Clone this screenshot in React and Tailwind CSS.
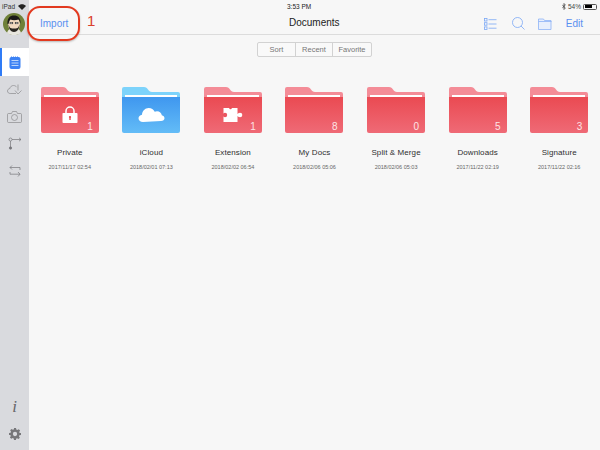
const font = { fontFamily: '"Liberation Sans", Arial, sans-serif' };

const folders = [
    {name: "Private", date: "2017/11/17 02:54", count: "1", icon: "lock"},
    {name: "iCloud", date: "2018/02/01 07:13", count: "", icon: "cloud", blue: true},
    {name: "Extension", date: "2018/02/02 06:54", count: "1", icon: "puzzle"},
    {name: "My Docs", date: "2018/02/06 05:06", count: "8"},
    {name: "Split & Merge", date: "2018/02/06 05:03", count: "0"},
    {name: "Downloads", date: "2017/11/22 02:19", count: "5"},
    {name: "Signature", date: "2017/11/22 02:16", count: "3"},
];

const FolderIcon = ({name, blue, icon}) => {
    const id = "grad-" + name.replace(/\W/g, "");
    return (
        <svg width="58" height="46" viewBox="0 0 58 46" className="block">
            <defs>
                <linearGradient id={id} x1="0" y1="0" x2="0" y2="1">
                    <stop offset="0" stopColor={blue ? "#3f97ef" : "#ea4a52"} />
                    <stop offset="1" stopColor={blue ? "#63bcf7" : "#ef6a76"} />
                </linearGradient>
            </defs>
            <path d="M0 2a2 2 0 0 1 2-2h20c2 0 3 1 4 2.500c1 1.500 2 2.500 4 2.500h26a2 2 0 0 1 2 2v8H0z" fill={blue ? "#7dd3fb" : "#f48c97"} />
            <path d="M0 10h58v34a2 2 0 0 1-2 2H2a2 2 0 0 1-2-2z" fill={`url(#${id})`} />
            <rect x="3" y="8" width="52" height="2" fill="#ffffff" />
            {icon === "lock" && (
                <g>
                    <path d="M25 27v-3a4 4 0 0 1 8 0v3" fill="none" stroke="#fff" strokeWidth="1.500" />
                    <rect x="21.500" y="26" width="15" height="10" rx="0.800" fill="#fff" />
                    <rect x="28.300" y="29.500" width="1.400" height="3.500" fill="#ea4a52" />
                    <circle cx="29" cy="30" r="1.100" fill="#ea4a52" />
                </g>
            )}
            {icon === "cloud" && (
                <path d="M21 35c-2.500 0-4.500-1.600-4.500-3.700c0-1.900 1.500-3.300 3.500-3.600c.3-3.900 3.300-6.700 6.700-6.700c2.700 0 5 1.500 6 3.800c.7-.4 1.500-.6 2.300-.6c2.600 0 4.600 1.900 4.800 4.100c1.600.4 2.700 1.500 2.700 3c0 1.500-1.500 2.700-3.500 2.700z" fill="#fff" />
            )}
            {icon === "puzzle" && (
                <g>
                    <rect x="19.500" y="21" width="14" height="14" fill="#fff" />
                    <rect x="33" y="26.800" width="2" height="2.400" fill="#fff" />
                    <circle cx="36" cy="28" r="2.300" fill="#fff" />
                    <circle cx="21" cy="28" r="2.200" fill="#ea5560" />
                    <circle cx="26.500" cy="21" r="1.300" fill="#ea4f58" />
                </g>
            )}
        </svg>
    );
};

const FolderCell = ({folder}) => (
    <div className="flex flex-col items-center">
        <div className="relative w-[58px] h-[46px]">
            <FolderIcon {...folder} />
            {folder.count && (
                <span className="absolute right-[6px] bottom-0 text-[10px] leading-[12px] text-[#fde4e6]">{folder.count}</span>
            )}
        </div>
        <div className="mt-[14px] text-[8px] leading-[11px] text-[#2f2f2f] tracking-[0.1px]">{folder.name}</div>
        <div className="mt-[5px] text-[5.5px] leading-[8px] text-[#666]">{folder.date}</div>
    </div>
);

const SideIcon = ({children, className = ""}) => (
    <div className={`flex justify-center items-center ${className}`}>{children}</div>
);

const Sidebar = () => (
    <div className="w-[29px] h-full shrink-0 bg-[#d9dade] flex flex-col">
        <div className="pt-[13px] pl-[3px] h-[48px]">
            <svg width="22" height="22" viewBox="0 0 22 22" className="block">
                <circle cx="11" cy="11" r="11" fill="#6f8038" />
                <path d="M4 20c1-4 4-5 7-5s6 1 7 5c-2 1.500-4.500 2-7 2s-5-.5-7-2z" fill="#e8e6df" />
                <ellipse cx="11" cy="11" rx="6" ry="7.500" fill="#f1d9c0" />
                <path d="M4.500 11C4 5 7 2.500 11 2.500S18 5 17.500 11c-.5-2-1-3.500-2-4.500c-3 1-6 1-8 0c-1 1-1.500 2.500-2 4.500z" fill="#1b1a17" />
                <path d="M5.500 11c0 5 2.500 8 5.500 8s5.500-3 5.500-8c-.5 2-1 3.500-2 4c-2 .8-5 .8-7 0c-1-.5-1.500-2-2-4z" fill="#2a2723" />
                <rect x="7" y="9.300" width="2.800" height="1.500" fill="#fff" stroke="#111" strokeWidth="0.500" />
                <rect x="12.200" y="9.300" width="2.800" height="1.500" fill="#fff" stroke="#111" strokeWidth="0.500" />
            </svg>
        </div>
        <div className="h-[28px] bg-white border-l-2 border-[#2f7bf6] flex items-center justify-center pr-[2px]">
            <svg width="12" height="13" viewBox="0 0 12 13">
                <rect x="0.500" y="1" width="11" height="12" rx="2" fill="#3d82f4" />
                <path d="M2.500 .5v2M4.500 .5v2M6.500 .5v2M8.500 .5v2" stroke="#3d82f4" strokeWidth="1" />
                <path d="M2.500 4.500h7M2.500 7h7M2.500 9.500h7" stroke="#bcd5fb" strokeWidth="1" />
            </svg>
        </div>
        <SideIcon className="h-[27px]">
            <svg width="16" height="12" viewBox="0 0 16 12" fill="none" stroke="#8b8b8e" strokeWidth="0.700">
                <path d="M9 9.500H3.200C1.700 9.500.5 8.500.5 7c0-1.300 1-2.300 2.300-2.500C3.200 2.700 4.700 1.500 6.500 1.500c1.300 0 2.500.6 3.200 1.700" />
                <path d="M11 .5v6M8 6.500l3 3.500 3.500-3.500" />
            </svg>
        </SideIcon>
        <SideIcon className="h-[27px]">
            <svg width="15" height="12" viewBox="0 0 15 12" fill="none" stroke="#8b8b8e" strokeWidth="0.700">
                <path d="M1.500 2.500h3l1-2h4l1 2h3a1 1 0 0 1 1 1v7a1 1 0 0 1-1 1h-12a1 1 0 0 1-1-1v-7a1 1 0 0 1 1-1z" />
                <circle cx="7.500" cy="6.500" r="3" />
            </svg>
        </SideIcon>
        <SideIcon className="h-[27px]">
            <svg width="14" height="13" viewBox="0 0 14 13" fill="none" stroke="#77777b" strokeWidth="0.700">
                <circle cx="2.500" cy="2.500" r="1.500" />
                <path d="M4 2.500h9M11 .8l2 1.700-2 1.700M2.500 4v6" />
                <circle cx="2.500" cy="11" r="1.200" fill="#77777b" />
            </svg>
        </SideIcon>
        <SideIcon className="h-[27px]">
            <svg width="12" height="12" viewBox="0 0 12 12" fill="none" stroke="#77777b" strokeWidth="0.700">
                <path d="M3 .5L1 2.500l2 2M1 2.500h10V5M9 7l2 2.200-2 2.300M11 9.200H1V7" />
            </svg>
        </SideIcon>
        <div className="flex-1" />
        <SideIcon className="h-[20px] mb-[10px]">
            <span className="text-[17px] leading-[20px] italic text-[#66666a]" style={{fontFamily: '"Liberation Serif", serif'}}>i</span>
        </SideIcon>
        <SideIcon className="h-[13px] mb-[10px]">
            <svg width="12" height="12" viewBox="0 0 24 24">
                <path fill="#77777a" fillRule="evenodd" d="M10 0h4l.6 3.200 2.100.9 2.700-1.800 2.800 2.800-1.800 2.700.9 2.100L24 10v4l-3.200.6-.9 2.100 1.800 2.700-2.800 2.800-2.700-1.800-2.100.9L14 24h-4l-.6-3.200-2.100-.9-2.700 1.800-2.800-2.800 1.800-2.700-.9-2.100L0 14v-4l3.200-.6.900-2.100L2.300 4.600l2.800-2.800 2.700 1.800 2.100-.9zM12 7.700a4.300 4.300 0 1 0 0 8.600A4.300 4.300 0 0 0 12 7.700z" />
            </svg>
        </SideIcon>
    </div>
);

const StatusBar = () => (
    <div className="absolute top-0 left-0 w-full h-[13px] flex items-center justify-between px-[2px] text-[#333] text-[6.500px] leading-[13px]">
        <div className="flex items-center gap-[3px]">
            <span>iPad</span>
            <svg width="8" height="6" viewBox="0 0 8 6"><path d="M4 6L0 2c2.200-2.300 5.800-2.300 8 0z" fill="#222" /></svg>
        </div>
        <span className="absolute left-[287px] text-[#222]">3:53 PM</span>
        <div className="flex items-center gap-[2px] pr-[1px] text-[#444]">
            <svg width="4" height="7" viewBox="0 0 4 7" fill="none" stroke="#333" strokeWidth="0.700">
                <path d="M.3 1.800l3 3.300-1.300 1.400V.5l1.300 1.400-3 3.300" />
            </svg>
            <span>54%</span>
            <div className="w-[14px] h-[6px] border border-[#555] rounded-[1.500px] p-[0.500px]">
                <div className="w-[7px] h-full bg-black" />
            </div>
        </div>
    </div>
);

const Header = () => (
    <div className="h-[21px] mt-[13px] border-b border-[#dcdcdc] box-content flex items-center justify-between pl-[11px] pr-[17px] relative">
        <span className="text-[10px] text-[#5a90f0]">Import</span>
        <span className="absolute left-[260px] top-[2px] text-[10px] text-[#1c1c1c] font-medium">Documents</span>
        <div className="flex items-center">
            <svg width="13" height="12" viewBox="0 0 13 12" fill="none" stroke="#7aa7f5" strokeWidth="0.800">
                <rect x="0.500" y="0.500" width="2.500" height="2.500" />
                <rect x="0.500" y="4.700" width="2.500" height="2.500" />
                <rect x="0.500" y="8.900" width="2.500" height="2.500" />
                <path d="M4.500 1.700h8M4.500 6h8M4.500 10.200h8" />
            </svg>
            <svg className="ml-[15px]" width="13" height="13" viewBox="0 0 13 13" fill="none" stroke="#7aa7f5" strokeWidth="0.800">
                <circle cx="5.500" cy="5.500" r="5" />
                <path d="M9 9l3.500 3.500" />
            </svg>
            <svg className="ml-[13px]" width="14" height="12" viewBox="0 0 14 12" fill="#e8effc" stroke="#8db3f6" strokeWidth="0.800">
                <path d="M.5 11.500V1h5l1 1.500h6.500v9z" />
                <path d="M.5 3.500h13" fill="none" />
            </svg>
            <span className="ml-[14px] text-[10px] text-[#5a90f0]">Edit</span>
        </div>
    </div>
);

const Segments = () => (
    <div className="flex justify-center mt-[7px]">
        <div className="flex h-[15px] border border-[#d2d2d2] rounded-[2px] bg-[#f9f9f9] text-[7.5px] leading-[13px] text-[#777]">
            <div className="w-[38px] text-center border-r border-[#d2d2d2]">Sort</div>
            <div className="w-[37px] text-center border-r border-[#d2d2d2]">Recent</div>
            <div className="w-[38px] text-center">Favorite</div>
        </div>
    </div>
);

export default function App() {
    return (
        <div className="relative w-[600px] h-[450px] flex overflow-hidden bg-[#f7f7f7]" style={font}>
            <Sidebar />
            <div className="flex-1 min-w-0">
                <Header />
                <Segments />
                <div className="grid grid-cols-7 mt-[30px]">
                    {folders.map((f) => (
                        <FolderCell key={f.name} folder={f} />
                    ))}
                </div>
            </div>
            <StatusBar />
            {/* the red marks are drawn on top of the screenshot */}
            <div className="absolute left-[27px] top-[6px] w-[53px] h-[35px] border-2 border-[#e2391f] rounded-[13px] shadow-[0_1px_2px_rgba(0,0,0,0.25)]" />
            <span className="absolute left-[87px] top-[13px] text-[15px] leading-[16px] text-[#d9402c]">1</span>
        </div>
    );
}
